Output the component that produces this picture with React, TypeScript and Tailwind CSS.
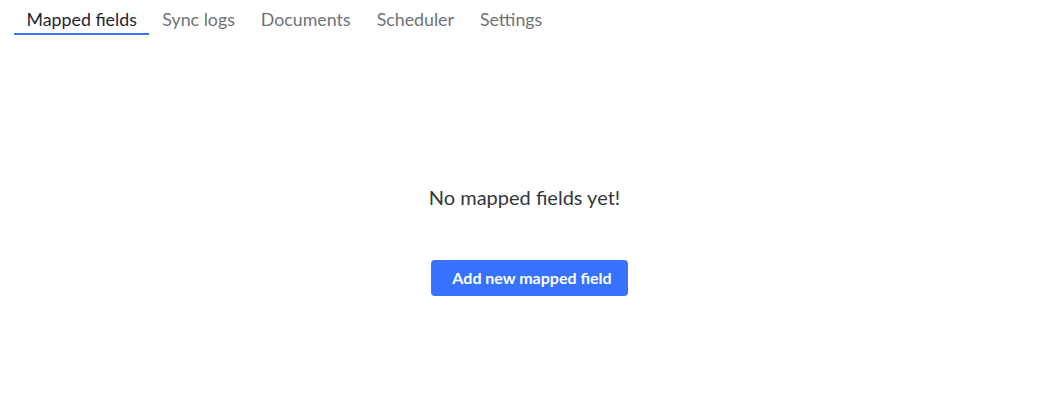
const TABS = ["Mapped fields", "Sync logs", "Documents", "Scheduler", "Settings"];

export default function App() {
  const active = "Mapped fields";

  return (
    <div className="h-[417px] w-full bg-white font-['Lato','Noto_Sans',sans-serif]">
      <nav className="flex pl-[14px]">
        {TABS.map((tab) => (
          <button
            key={tab}
            className={
              tab === active
                ? "border-b-2 border-[#3772ff] px-[12.5px] pb-[3px] pt-[8px] text-[17.8px] leading-[22px] text-[#1f2430]"
                : "border-b-2 border-transparent px-[13px] pb-[3px] pt-[8px] text-[17.8px] leading-[22px] text-[#6f7277]"
            }
          >
            {tab}
          </button>
        ))}
      </nav>

      <div className="flex flex-col items-center pr-[4px] pt-[147px]">
        <p className="pr-[10px] text-[20px] leading-[30px] text-[#33363d]">No mapped fields yet!</p>
        <button className="mt-[48px] h-[36px] w-[197px] rounded-[4px] bg-[#3772ff] pl-[5px] text-[16px] font-bold text-white">
          Add new mapped field
        </button>
      </div>
    </div>
  );
}
